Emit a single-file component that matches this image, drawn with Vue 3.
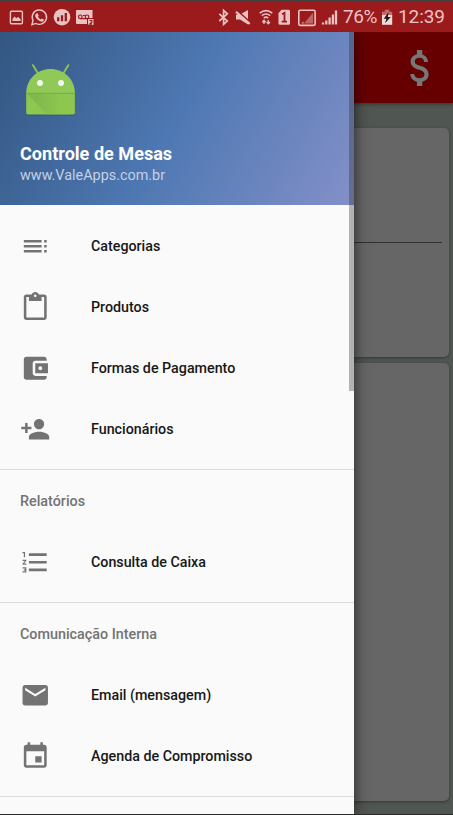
<script setup>
const icons = {
  toc: 'M3 9h14V7H3v2zm0 4h14v-2H3v2zm0 4h14v-2H3v2zm16 0h2v-2h-2v2zm0-10v2h2V7h-2zm0 6h2v-2h-2v2z',
  clip: 'M19 2h-4.18C14.4.84 13.3 0 12 0c-1.3 0-2.4.84-2.82 2H5c-1.1 0-2 .9-2 2v16c0 1.1.9 2 2 2h14c1.1 0 2-.9 2-2V4c0-1.1-.9-2-2-2zm-7 0c.55 0 1 .45 1 1s-.45 1-1 1-1-.45-1-1 .45-1 1-1zm7 18H5V4h2v3h10V4h2v16z',
  wallet: 'M21 18v1c0 1.1-.9 2-2 2H5c-1.11 0-2-.9-2-2V5c0-1.1.89-2 2-2h14c1.1 0 2 .9 2 2v1h-9c-1.11 0-2 .9-2 2v8c0 1.1.89 2 2 2h9zm-9-2h10V8H12v8zm4-2.5c-.83 0-1.5-.67-1.5-1.5s.67-1.5 1.5-1.5 1.5.67 1.5 1.5-.67 1.5-1.5 1.5z',
  person: 'M15 12c2.21 0 4-1.79 4-4s-1.79-4-4-4-4 1.79-4 4 1.79 4 4 4zm-9-2V7H4v3H1v2h3v3h2v-3h3v-2H6zm9 4c-2.67 0-8 1.34-8 4v2h16v-2c0-2.66-5.33-4-8-4z',
  list: 'M2 17h2v.5H3v1h1v.5H2v1h3v-4H2v1zm1-9h1V4H2v1h1v3zm-1 3h1.8L2 13.1v.9h3v-1H3.2L5 10.9V10H2v1zm5-6v2h14V5H7zm0 14h14v-2H7v2zm0-6h14v-2H7v2z',
  mail: 'M20 4H4c-1.1 0-1.99.9-1.99 2L2 18c0 1.1.9 2 2 2h16c1.1 0 2-.9 2-2V6c0-1.1-.9-2-2-2zm0 4l-8 5-8-5V6l8 5 8-5v2z',
  event: 'M17 12h-5v5h5v-5zM16 1v2H8V1H6v2H5c-1.11 0-1.99.9-1.99 2L3 19c0 1.1.89 2 2 2h14c1.1 0 2-.9 2-2V5c0-1.1-.9-2-2-2h-1V1h-2zm3 18H5V8h14v11z'
}
const groups = [
  { items: [['toc', 'Categorias'], ['clip', 'Produtos'], ['wallet', 'Formas de Pagamento'], ['person', 'Funcionários']] },
  { title: 'Relatórios', items: [['list', 'Consulta de Caixa']] },
  { title: 'Comunicação Interna', items: [['mail', 'Email (mensagem)'], ['event', 'Agenda de Compromisso']] }
]
</script>

<template>
  <div class="screen">
    <header class="status">
      <svg class="status-icons" width="98" height="30" viewBox="0 2 98 30">
        <g fill="none" stroke="#e9c3c4" stroke-width="1.4">
          <rect x="10.4" y="11.2" width="12" height="12.6" rx="1" />
          <path d="M31.9 24.6l1.1-4.1a7.2 7.2 0 1 1 2.8 2.9z" />
        </g>
        <g fill="#e9c3c4">
          <path d="M12.5 21v-2l2-2.6 1.8 1.8 1.8-1.3 2.5 2.4V21z" />
          <path d="M36.3 13.5l1.4-.3 1.1 2.5-.8 1.1c.7 1.3 1.4 2 2.7 2.6l1-1 2.2 1.1c.1 1.8-1.7 2.5-3.1 2-3-.9-5-3-5.6-5.2-.2-1.1.3-2.1 1.1-2.8z" />
          <circle cx="62" cy="17.2" r="8.3" />
          <path d="M77 10h15.5v8H87v6H77q-1 0-1-1V11q0-1 1-1z" />
          <path d="M88 19h5.5v6H88z" />
        </g>
        <path d="M58.2 17.2v4M62 15.2v6M65.8 13v8.2" stroke="#9b1a1b" stroke-width="2.3" />
        <g fill="none" stroke="#9b1a1b" stroke-width="1.2">
          <circle cx="80.3" cy="16.8" r="1.8" />
          <circle cx="87" cy="16.8" r="1.8" />
          <path d="M80.3 18.6H87M83 15.5h2M89.4 20.5h2.4v1.7l-2.2 1.9h2.5" />
        </g>
      </svg>
      <svg class="status-icons" width="125" height="30" viewBox="215 2 125 30">
        <path d="M219.3 13.8l8 7.2-3.7 3.4V10.4l3.7 3.4-8 7.2" fill="none" stroke="#e9c3c4" stroke-width="1.7" />
        <g fill="#e9c3c4">
          <path d="M236 14.5h4l8-4.5v14.5l-8-5h-4z" />
          <path d="M278.5 13.2l3-3.5h7q1.5 0 1.5 1.5v12q0 1.5-1.5 1.5h-8.3q-1.7 0-1.7-1.5z" />
        </g>
        <path d="M236.5 10.3L250.5 22.8" stroke="#9b1a1b" stroke-width="2" />
        <path d="M236 11.8L249.7 23.9" stroke="#e9c3c4" stroke-width="2.1" />
        <g fill="none" stroke="#e9c3c4" stroke-width="1.6">
          <path d="M259.7 13.2q6.3-5.2 12.6 0M261.8 15.7q4.2-3.4 8.4 0M263.8 18q2.2-1.7 4.4 0" />
          <path d="M264 24v-3.5m-1.7 1.7l1.7-1.9 1.7 1.9M268.3 20v3.7m-1.7-1.7l1.7 1.9 1.7-1.9" stroke-width="1.3" />
          <rect x="298.8" y="10.2" width="16.3" height="15.2" rx="1.3" />
        </g>
        <path d="M282 14.3l2.5-1.5v8.8m-2.8 0h5.3" fill="none" stroke="#9b1a1b" stroke-width="1.8" />
        <path d="M304 23.4l9-10.6v10.6z" fill="#c26364" />
        <path d="M301.5 23.4h2v-2z" fill="#e9c3c4" />
        <path d="M323 24.5v-2M326.3 24.5v-4M329.6 24.5v-7M332.9 24.5v-10M336 24.5v-14" stroke="#e9c3c4" stroke-width="2.3" />
      </svg>
      <span class="percent">76%</span>
      <svg class="battery" width="12" height="30" viewBox="381 2 12 30">
        <path d="M382 11.7h2.8V9.8h4.5v1.9h2.9v4H382z" fill="#bf6d6e" />
        <path d="M382 15h10.2v9.8H382z" fill="#f0dada" />
        <path d="M388.7 12l-5 6.8h2.7l-1.4 4.5 5.8-6.2h-3z" fill="#211415" />
      </svg>
      <span class="clock">12:39</span>
    </header>

    <main class="stage">
      <section class="page">
        <div class="appbar">
          <svg class="dollar" width="43" height="48" viewBox="0 0 24 24" preserveAspectRatio="none">
            <path d="M11.8 10.9c-2.27-.59-3-1.2-3-2.15 0-1.09 1.01-1.85 2.7-1.85 1.78 0 2.44.85 2.5 2.1h2.21c-.07-1.72-1.12-3.3-3.21-3.81V3h-3v2.16c-1.94.42-3.5 1.68-3.5 3.61 0 2.31 1.91 3.46 4.7 4.13 2.5.6 3 1.48 3 2.41 0 .69-.49 1.79-2.7 1.79-2.06 0-2.87-.92-2.98-2.1h-2.2c.12 2.19 1.76 3.42 3.68 3.83V21h3v-2.15c1.95-.37 3.5-1.5 3.5-3.55 0-2.84-2.43-3.81-4.7-4.4z" />
          </svg>
        </div>
        <div class="cards">
          <div class="card first"><div class="rule"></div></div>
          <div class="card second"></div>
        </div>
      </section>

      <nav class="drawer">
        <div class="profile">
          <svg class="robot" width="52" height="56" viewBox="25 63 52 56">
            <path d="M26.3 93q0 22.5 0 21 0 1.7 1.7 1.7h45.2q1.7 0 1.7-1.7V93z" fill="#34536f" opacity=".65" />
            <path d="M33 65.2l5 8.3M68.3 65.2l-5 8.3" stroke="#8cc152" stroke-width="2" stroke-linecap="round" />
            <path d="M26.2 93.3C26.2 79 37.5 69 50.5 69s24.4 10 24.4 24.3z" fill="#90c957" />
            <path d="M26.2 93.3h48.7v19.5q0 1.6-1.6 1.6H27.8q-1.6 0-1.6-1.6z" fill="#8dc74f" />
            <path d="M27 93.5l20 20.8H70L56 93.5z" fill="url(#fold)" />
            <path d="M26.2 93.3h48.7" stroke="#79ad49" stroke-width="1" />
            <circle cx="40" cy="83" r="3" fill="#f4f7f1" />
            <circle cx="61" cy="83" r="3" fill="#f4f7f1" />
            <defs>
              <linearGradient id="fold">
                <stop offset="0" stop-color="#7cb44a" />
                <stop offset=".8" stop-color="#8dc74f" />
              </linearGradient>
            </defs>
          </svg>
          <div class="name">Controle de Mesas</div>
          <div class="site">www.ValeApps.com.br</div>
        </div>
        <div class="menu">
          <section v-for="(g, i) in groups" :key="i" class="group">
            <h2 v-if="g.title" class="group-title">{{ g.title }}</h2>
            <div v-for="[icon, label] in g.items" :key="label" class="item">
              <svg class="item-icon" viewBox="0 0 24 24"><path :d="icons[icon]" /></svg>
              <span>{{ label }}</span>
            </div>
          </section>
        </div>
        <div class="scrollbar"></div>
      </nav>
    </main>
  </div>
</template>

<style>
body { margin: 0; }
</style>

<style scoped>
.screen {
  box-sizing: border-box;
  width: 453px;
  height: 815px;
  display: flex;
  flex-direction: column;
  overflow: hidden;
  border-top: 2px solid #404040;
  border-bottom: 1px solid #29292b;
  font-family: Roboto, "Liberation Sans", sans-serif;
}
.status {
  position: relative;
  z-index: 1;
  flex: none;
  height: 30px;
  display: flex;
  align-items: center;
  background: #9b1a1b;
  color: #e9c3c4;
  font-size: 19px;
  line-height: 32px;
}
.status-icons + .status-icons { margin-left: 117px; }
.percent { width: 38px; margin-left: 3px; letter-spacing: -0.4px; white-space: nowrap; }
.clock { margin-left: 5px; letter-spacing: -0.1px; white-space: nowrap; }
.stage { flex: 1; display: grid; min-height: 0; }
.page, .drawer { grid-area: 1 / 1; min-height: 0; }
.page { background: #505651; }
.appbar {
  height: 71px;
  display: flex;
  align-items: center;
  justify-content: flex-end;
  background: #660000;
  box-shadow: 0 1px 4px rgba(0, 0, 0, .4);
}
.dollar { margin-right: 11px; fill: #777; }
.cards { display: flex; flex-direction: column; gap: 6px; padding: 25px 4px 0; }
.card { background: #666; border-radius: 5px; box-shadow: 0 1px 3px rgba(0, 0, 0, .35); }
.first { height: 229px; }
.second { height: 438px; }
.rule { width: 438px; height: 114px; border-bottom: 1px solid #303030; }
.drawer {
  position: relative;
  width: 354px;
  overflow: hidden;
  background: #fafafa;
  box-shadow: 0 0 14px rgba(0, 0, 0, .65);
}
.profile {
  box-sizing: border-box;
  height: 173px;
  padding: 31px 20px 0 25px;
  background: linear-gradient(119deg, #335681 0%, #4e78b3 50%, #8490c8 100%);
}
.robot { display: block; }
.name { margin: 23px 0 0 -5px; color: #fff; font-size: 18.08px; font-weight: 700; line-height: 24px; }
.site { margin: 0 0 0 -5px; color: #c4d0e3; font-size: 14.4px; line-height: 20px; }
.menu { padding-top: 10px; }
.group { padding: .5px 0 9.5px; border-bottom: 1px solid #dcdcdc; }
.group-title {
  margin: 0;
  padding-left: 20px;
  color: #737373;
  font-size: 14.35px;
  font-weight: 500;
  line-height: 61px;
}
.item {
  height: 61px;
  display: flex;
  align-items: center;
  gap: 40.5px;
  padding-left: 20px;
  color: #171717;
  font-size: 14.27px;
  font-weight: 500;
}
.item-icon { width: 30.5px; height: 30.5px; fill: #737373; }
.scrollbar { position: absolute; top: 0; right: 0; width: 5px; height: 359px; background: rgba(40, 40, 40, .34); }
</style>
